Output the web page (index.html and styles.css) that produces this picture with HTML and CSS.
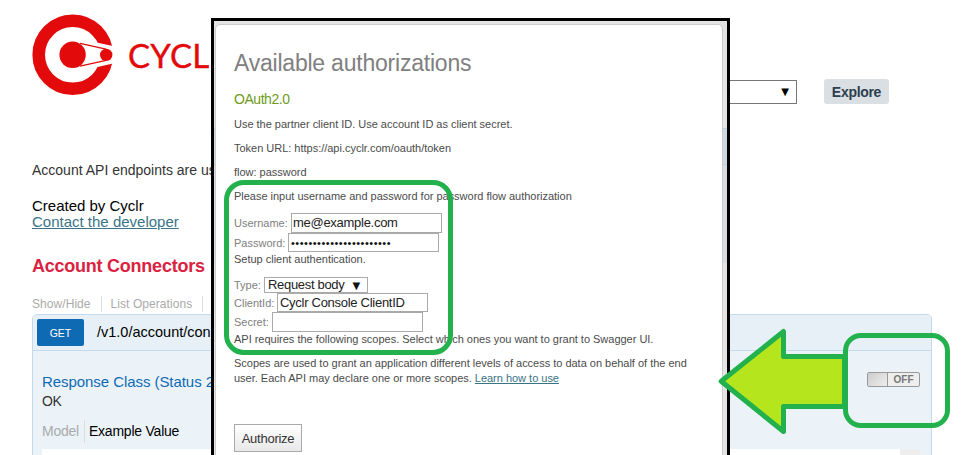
FILE: index.html
```
<!DOCTYPE html>
<html lang="en">
<head>
<meta charset="utf-8">
<title>Cyclr API</title>
<link rel="stylesheet" href="styles.css">
</head>
<body>
<main class="page">
  <header class="topbar">
    <div class="brand">
      <svg class="logo" width="84" height="84" viewBox="30 13 84 84">
        <circle cx="72.7" cy="54.8" r="34" fill="none" stroke="#e20a0a" stroke-width="12.6"/>
        <path d="M96.5 42.6L115 46.4V63L96.5 67.2Z" fill="#fff"/>
        <path d="M80 43.4L106 49.2M80 66.2L106 60.4" stroke="#e20a0a" stroke-width="1.3"/>
        <circle cx="72.6" cy="54.8" r="13.2" fill="#e20a0a"/>
        <circle cx="106.2" cy="54.9" r="6.2" fill="#e20a0a"/>
      </svg>
      <span class="wordmark">CYCL</span>
    </div>
    <div class="controls">
      <div class="api-select"><span class="caret">▼</span></div>
      <button class="explore">Explore</button>
    </div>
  </header>
  <section class="info">
    <p class="desc">Account API endpoints are us</p>
    <p class="author">Created by Cyclr</p>
    <a class="contact">Contact the developer</a>
    <h2>Account Connectors</h2>
    <div class="options"><span>Show/Hide</span><span>List Operations</span></div>
  </section>
  <section class="operation">
    <div class="op-head"><span class="method">GET</span><span class="path">/v1.0/account/con</span></div>
    <div class="op-body">
      <div class="response">
        <h4>Response Class (Status 2</h4>
        <p class="ok">OK</p>
        <div class="tabs"><span class="model">Model</span><span class="example">Example Value</span></div>
      </div>
      <div class="toggle"><i></i><span>OFF</span></div>
    </div>
    <div class="snippet"></div>
  </section>
</main>

<div class="dialog">
  <div class="panel">
    <h1>Available authorizations</h1>
    <h3>OAuth2.0</h3>
    <p>Use the partner client ID. Use account ID as client secret.</p>
    <p>Token URL: https://api.cyclr.com/oauth/token</p>
    <p>flow: password</p>
    <p>Please input username and password for password flow authorization</p>
    <div class="field user"><label>Username:</label><span class="input">me@example.com</span></div>
    <div class="field pass"><label>Password:</label><span class="input dots">•••••••••••••••••••••••</span></div>
    <p class="setup">Setup client authentication.</p>
    <div class="field type"><label>Type:</label><span class="select">Request body<b>▼</b></span></div>
    <div class="field client"><label>ClientId:</label><span class="input">Cyclr Console ClientID</span></div>
    <div class="field secret"><label>Secret:</label><span class="input"></span></div>
    <p>API requires the following scopes. Select which ones you want to grant to Swagger UI.</p>
    <p class="note">Scopes are used to grant an application different levels of access to data on behalf of the end<br>user. Each API may declare one or more scopes. <a>Learn how to use</a></p>
    <button class="authorize">Authorize</button>
  </div>
</div>

<div class="mark mark-form"></div>
<svg class="arrow" width="136" height="115" viewBox="714 324 136 115">
  <path d="M721.2 381.3L783.5 331.5V356.5H844.5V406.5H783.5V431.5Z" fill="#b5e61d" stroke="#22b14c" stroke-width="5" stroke-linejoin="round"/>
</svg>
<div class="mark mark-toggle"></div>
</body>
</html>
```
FILE: styles.css
```
* { box-sizing: border-box; }
html, body { margin: 0; width: 968px; height: 455px; overflow: hidden; background: #fff; }
body { position: relative; font-family: "Liberation Sans", Arial, sans-serif; }
h1, h2, h3, h4, p { margin: 0; font-weight: normal; white-space: nowrap; }
button { font-family: inherit; padding: 0; }

.page { width: 968px; height: 455px; overflow: hidden; }
.topbar { display: flex; justify-content: space-between; height: 150px; padding: 13px 79px 0 30px; }
.brand { display: flex; height: 84px; }
.logo { display: block; }
.wordmark { margin: 21px 0 0 14px; font: 33px/42px Lato, sans-serif; color: #e20a0a; letter-spacing: .3px; -webkit-text-stroke: .4px #e20a0a; }
.controls { display: flex; gap: 27px; margin-top: 66px; }
.api-select { width: 140px; height: 24px; margin-top: 1px; border: 1px solid #777; display: flex; align-items: center; justify-content: flex-end; padding: 0 7px 2px 0; }
.caret { font: 10px "DejaVu Sans", sans-serif; color: #000; }
.explore { width: 65px; height: 25px; border: 0; border-radius: 3px; background: #d9dfe2; color: #2c3e50; font-size: 14px; font-weight: bold; letter-spacing: -.3px; }

.info { padding-left: 32px; height: 164px; }
.desc { padding-top: 12px; font-size: 14px; line-height: 17px; color: #333; }
.author { margin-top: 19px; font-size: 15px; line-height: 16px; color: #000; }
.contact { display: block; font-size: 15px; line-height: 15px; color: #3a7486; text-decoration: underline; }
.info h2 { margin-top: 26px; font-size: 18px; line-height: 22px; font-weight: bold; color: #db2240; letter-spacing: -.24px; }
.options { display: flex; margin-top: 19px; font-size: 12px; line-height: 16px; letter-spacing: .06px; color: #aaa; }
.options span { padding-right: 10px; margin-right: 9px; border-right: 1px solid #ddd; }

.operation { width: 900px; height: 160px; margin-left: 32px; border: 1px solid #c3d9ec; border-radius: 5px; background: #ebf3f9; }
.op-head { height: 36px; display: flex; align-items: flex-start; border-bottom: 1px solid #c3d9ec; background: #e7f0f7; border-radius: 4px 4px 0 0; }
.method { width: 47px; height: 27px; margin: 4px 13px 0 4px; border-radius: 2px; background: #0f6ab4; color: #fff; font-size: 10.5px; line-height: 29px; text-align: center; }
.path { margin-top: 8px; font-size: 14.5px; line-height: 18px; color: #000; }
.op-body { display: flex; justify-content: space-between; padding: 21px 11px 0 9px; height: 98px; }
.op-body h4 { font-size: 15px; line-height: 20px; letter-spacing: -.06px; color: #0f6ab4; }
.ok { font-size: 14px; line-height: 18px; color: #333; letter-spacing: -.4px; }
.tabs { display: flex; margin-top: 10px; font-size: 14px; line-height: 23px; letter-spacing: -.23px; }
.model { color: #aaa; padding-right: 5px; border-right: 1px solid #ddd; }
.example { color: #000; padding-left: 4px; }
.toggle { display: flex; width: 53px; height: 15px; border: 1px solid #999; border-radius: 2px; background: #eee; }
.toggle i { width: 20px; border-right: 1px solid #999; background: linear-gradient(135deg, #ccc, #eee); }
.toggle span { flex: 1; text-align: center; font-size: 10px; line-height: 14px; font-weight: bold; color: #777; }
.snippet { width: 878px; height: 30px; margin-left: 9px; background: linear-gradient(90deg, #fff 858px, #eee 858px); }

.dialog { position: absolute; left: 211px; top: 18px; width: 519px; height: 440px; border: 3px solid #000; background: linear-gradient(#e4e4e4 107px, #b9cddd 107px, #b9cddd 108px, #ced8df 108px, #ced8df 143px, #b9cddd 143px, #b9cddd 144px, #d5dce2 144px, #d5dce2 242px, #e4e4e4 242px); padding: 3px 4px 0 1px; }
.panel { height: 440px; border: 1px solid #ccc; border-radius: 5px; background: #fff; padding: 23px 0 0 18px; color: #4b4b4b; font-size: 11px; line-height: 14px; }
.panel h1 { font-size: 23px; line-height: 30px; letter-spacing: -.22px; color: #808080; }
.panel h3 { font-size: 14px; line-height: 16px; letter-spacing: -.45px; margin: 13px 0 10px; color: #6f9b22; }
.panel p { margin-bottom: 10px; letter-spacing: -.015px; }
.field { display: flex; align-items: center; }
.field label { color: #808080; white-space: nowrap; }
.input { display: flex; align-items: center; width: 151px; height: 19px; border: 1px solid #aaa; padding-left: 2px; font-size: 13px; letter-spacing: -.28px; color: #222; white-space: nowrap; }
.user label { width: 57px; }
.user .input { height: 20px; padding-left: 1px; }
.pass label { width: 54px; }
.dots { font-size: 11px; letter-spacing: .5px; color: #111; }
.panel .setup { margin: 0 0 11px; }
.type label { width: 30px; }
.select { display: flex; align-items: center; width: 104px; height: 16px; border: 1px solid #aaa; padding-left: 3px; font-size: 13px; letter-spacing: -.32px; color: #222; white-space: nowrap; }
.select b { font: 10px "DejaVu Sans", sans-serif; margin-left: 8px; color: #111; }
.client label { width: 43px; }
.secret label { width: 38px; }
.secret .input { height: 20px; }
.panel .note { line-height: 15px; }
.note a { color: #3a7486; text-decoration: underline; }
.authorize { display: block; margin-top: 38px; width: 68px; height: 28px; border: 1px solid #aaa; background: linear-gradient(#fff, #e8e8e8); color: #333; font-size: 13px; letter-spacing: -.25px; }

.mark { position: absolute; border: 5px solid #22b14c; }
.mark-form { left: 224px; top: 180px; width: 229px; height: 175px; border-radius: 20px; }
.mark-toggle { left: 843px; top: 333px; width: 107px; height: 95px; border-radius: 18px; }
.arrow { position: absolute; left: 714px; top: 324px; }
```
